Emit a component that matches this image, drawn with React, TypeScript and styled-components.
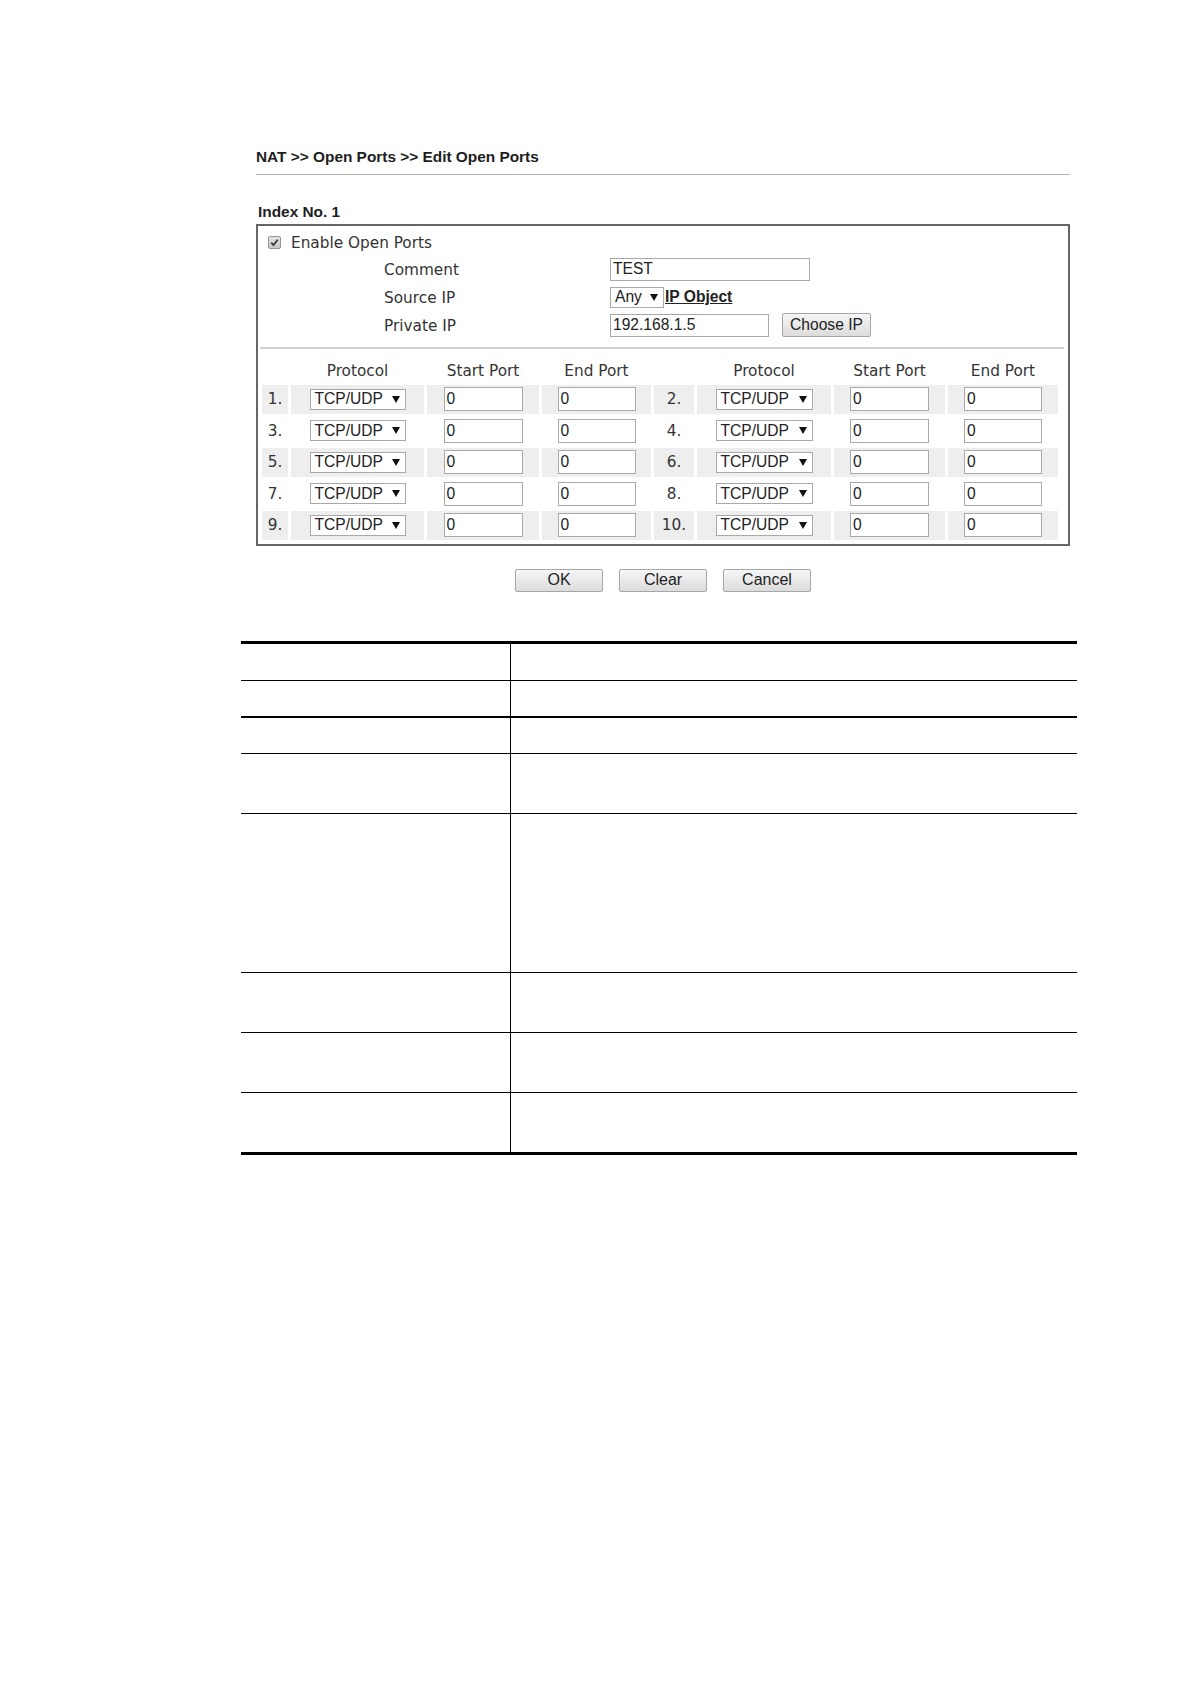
import React from 'react';
import styled, { createGlobalStyle } from 'styled-components';

const PORT_ROWS = [1, 2, 3, 4, 5];

// heights of the empty description table rows, and the rule under each
const DESC_ROWS = [
  { height: 36, line: 1 },
  { height: 35, line: 2 },
  { height: 35, line: 1 },
  { height: 59, line: 1 },
  { height: 158, line: 1 },
  { height: 59, line: 1 },
  { height: 59, line: 1 },
  { height: 59, line: 0 },
];

export default function App() {
  return (
    <Page>
      <GlobalStyle />
      <Screen>
        <Title>NAT &gt;&gt; Open Ports &gt;&gt; Edit Open Ports</Title>
        <Rule />
        <IndexLabel>Index No. 1</IndexLabel>
        <Box>
          <EnableRow>
            <CheckBox>
              <svg width="9" height="9" viewBox="0 0 9 9">
                <path d="M1.2 4.6 L3.5 7 L7.8 1.6" fill="none" stroke="#444" strokeWidth="1.9" />
              </svg>
            </CheckBox>
            <FieldLabel>Enable Open Ports</FieldLabel>
          </EnableRow>
          <FormRow>
            <FieldLabel>Comment</FieldLabel>
            <Controls>
              <TextBox $w={200} $h={23} readOnly value="TEST" />
            </Controls>
          </FormRow>
          <FormRow>
            <FieldLabel>Source IP</FieldLabel>
            <Controls>
              <FakeSelect $w={54}>
                Any
                <Arrow />
              </FakeSelect>
              <ObjectLink href="#">IP Object</ObjectLink>
            </Controls>
          </FormRow>
          <FormRow>
            <FieldLabel>Private IP</FieldLabel>
            <Controls>
              <TextBox $w={159} $h={23} readOnly value="192.168.1.5" />
              <ChooseButton>Choose IP</ChooseButton>
            </Controls>
          </FormRow>
          <Separator />
          <PortGrid>
            <HeadCell />
            <HeadCell>Protocol</HeadCell>
            <HeadCell>Start Port</HeadCell>
            <HeadCell>End Port</HeadCell>
            <HeadCell />
            <HeadCell>Protocol</HeadCell>
            <HeadCell>Start Port</HeadCell>
            <HeadCell>End Port</HeadCell>
            {PORT_ROWS.map((row) => {
              const shaded = row % 2 === 1;
              return [0, 1].map((side) => {
                const n = (row - 1) * 2 + side + 1;
                return (
                  <React.Fragment key={n}>
                    <Cell $shaded={shaded}>{n}.</Cell>
                    <Cell $shaded={shaded}>
                      <FakeSelect $w={side ? 97 : 96}>
                        TCP/UDP
                        <Arrow />
                      </FakeSelect>
                    </Cell>
                    <Cell $shaded={shaded}>
                      <TextBox $w={79} $h={24} readOnly value="0" />
                    </Cell>
                    <Cell $shaded={shaded}>
                      <TextBox $w={78} $h={24} readOnly value="0" />
                    </Cell>
                  </React.Fragment>
                );
              });
            })}
          </PortGrid>
        </Box>
        <ButtonBar>
          <ActionButton>OK</ActionButton>
          <ActionButton>Clear</ActionButton>
          <ActionButton>Cancel</ActionButton>
        </ButtonBar>
      </Screen>
      <DescTable>
        {DESC_ROWS.map((r, i) => (
          <DescRow key={i} $height={r.height} $line={r.line}>
            <DescKey />
            <div />
          </DescRow>
        ))}
      </DescTable>
    </Page>
  );
}

const GlobalStyle = createGlobalStyle`
  html, body {
    margin: 0;
    padding: 0;
    background: #fff;
  }
  body {
    font-family: 'DejaVu Sans', Verdana, sans-serif;
    color: #333;
  }
`;

const Page = styled.div`
  width: 1190px;
  min-height: 1684px;
  padding-top: 147px;
  box-sizing: border-box;
`;

const Screen = styled.div`
  margin-left: 256px;
  width: 814px;
`;

const Title = styled.h1`
  margin: 0;
  font-family: 'Liberation Sans', Arial, sans-serif;
  font-size: 15.4px;
  font-weight: 700;
  line-height: 20px;
  color: #1e1e1e;
`;

const Rule = styled.div`
  margin-top: 7px;
  border-top: 1px solid #b4b4b4;
`;

const IndexLabel = styled.div`
  margin-top: 28px;
  padding-left: 2px;
  font-family: 'Liberation Sans', Arial, sans-serif;
  font-size: 15.4px;
  font-weight: 700;
  line-height: 18px;
  color: #1e1e1e;
`;

const Box = styled.div`
  margin-top: 3px;
  border: 2px solid #666;
  padding: 3px 0 4px;
`;

const EnableRow = styled.div`
  display: flex;
  align-items: center;
  gap: 10px;
  height: 26px;
  padding-left: 10px;
`;

const CheckBox = styled.span`
  width: 13px;
  height: 13px;
  box-sizing: border-box;
  border: 1px solid #959595;
  border-radius: 2px;
  background: linear-gradient(#e4e4e4, #c9c9c9);
  display: flex;
  align-items: center;
  justify-content: center;
`;

const FormRow = styled.div`
  display: grid;
  grid-template-columns: 226px auto;
  align-items: center;
  height: 28px;
  padding-left: 126px;
`;

const FieldLabel = styled.span`
  font-size: 15.3px;
  padding-top: 2px;
`;

const Controls = styled.div`
  display: flex;
  align-items: center;
`;

const TextBox = styled.input<{ $w: number; $h: number }>`
  width: ${(p) => p.$w}px;
  height: ${(p) => p.$h}px;
  box-sizing: border-box;
  border: 1px solid #a9a9a9;
  padding: 0 2px;
  margin: 0;
  background: #fff;
  font-family: 'Liberation Sans', Arial, sans-serif;
  font-size: 15.6px;
  color: #222;
  outline: none;
`;

const FakeSelect = styled.div<{ $w: number }>`
  width: ${(p) => p.$w}px;
  height: 21px;
  box-sizing: border-box;
  border: 1px solid #a9a9a9;
  background: #fff;
  display: flex;
  align-items: center;
  padding-left: 4px;
  font-family: 'Liberation Sans', Arial, sans-serif;
  font-size: 15.6px;
  color: #222;
`;

const Arrow = styled.span`
  margin-left: auto;
  margin-right: 5px;
  width: 0;
  height: 0;
  border-left: 4px solid transparent;
  border-right: 4px solid transparent;
  border-top: 7px solid #111;
`;

const ObjectLink = styled.a`
  margin-left: 1px;
  font-family: 'Liberation Sans', Arial, sans-serif;
  font-size: 15.6px;
  font-weight: 700;
  color: #222;
  text-decoration: underline;
`;

const ChooseButton = styled.button`
  margin-left: 13px;
  width: 89px;
  height: 24px;
  padding: 0;
  border: 1px solid #a6a6a6;
  border-radius: 2px;
  background: linear-gradient(#f6f6f6, #dcdcdc);
  font-family: 'Liberation Sans', Arial, sans-serif;
  font-size: 15.6px;
  color: #222;
`;

const Separator = styled.div`
  margin: 8px 4px 0 2px;
  border-top: 2px solid #d0d0d0;
`;

const PortGrid = styled.div`
  display: grid;
  grid-template-columns: 26px 133px 112px 109px 40px 134px 111px 110px;
  grid-template-rows: 22px repeat(5, 28.5px);
  gap: 3px;
  margin: 11px 0 0 4px;
`;

const HeadCell = styled.div`
  display: flex;
  align-items: center;
  justify-content: center;
  font-size: 15.3px;
`;

const Cell = styled.div<{ $shaded: boolean }>`
  display: flex;
  align-items: center;
  justify-content: center;
  background: ${(p) => (p.$shaded ? '#eeeeee' : '#fff')};
  font-size: 15.3px;
`;

const ButtonBar = styled.div`
  display: flex;
  justify-content: center;
  gap: 16px;
  margin-top: 23px;
`;

const ActionButton = styled.button`
  width: 88px;
  height: 23px;
  padding: 0;
  border: 1px solid #a6a6a6;
  border-radius: 2px;
  background: linear-gradient(#f6f6f6, #dcdcdc);
  font-family: 'Liberation Sans', Arial, sans-serif;
  font-size: 16px;
  color: #222;
`;

const DescTable = styled.div`
  margin: 49px 0 0 241px;
  width: 836px;
  border-top: 3px solid #000;
  border-bottom: 3px solid #000;
`;

const DescRow = styled.div<{ $height: number; $line: number }>`
  display: grid;
  grid-template-columns: 270px 1fr;
  height: ${(p) => p.$height + p.$line}px;
  box-sizing: border-box;
  border-bottom: ${(p) => p.$line}px solid #000;
`;

const DescKey = styled.div`
  border-right: 1px solid #000;
`;
